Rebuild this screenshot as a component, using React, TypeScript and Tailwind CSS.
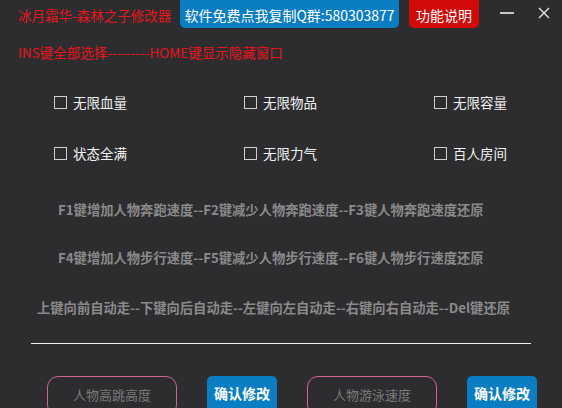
const font = "font-['Microsoft_YaHei','Noto_Sans_CJK_SC',sans-serif]";

function Check({ label }: { label: string }) {
  return (
    <label className="flex items-center gap-[6px] text-[13.5px] leading-[20px] text-[#f2f2f2]">
      <span className="block w-[13px] h-[13px] border border-[#cfcfcf] shrink-0" />
      {label}
    </label>
  );
}

function InputRow({ placeholder }: { placeholder: string }) {
  return (
    <div className="flex items-start gap-[30px]">
      <div className="w-[130px] h-[40px] rounded-[11px] border border-[#d1638e] flex items-start justify-center pt-[8px] text-[13px] text-[#7a7a7a]">
        {placeholder}
      </div>
      <button
        type="button"
        className="w-[70px] h-[40px] rounded-[5px] bg-[#0b7dc3] text-white font-bold text-[14px] flex items-start justify-center pt-[7px]"
      >
        确认修改
      </button>
    </div>
  );
}

export default function App() {
  return (
    <div className={`w-[562px] h-[408px] overflow-hidden bg-[#2d2d30] flex flex-col ${font}`}>
      {/* title bar */}
      <div className="h-[28px] flex items-start shrink-0">
        <span className="w-[180px] shrink-0 pl-[18px] pt-[5px] text-[13.5px] leading-[20px] text-[#e8141c] whitespace-nowrap">
          冰月霜华-森林之子修改器
        </span>
        <button
          type="button"
          className="w-[219px] shrink-0 h-[28px] rounded-b-[5px] bg-[#0b7dc3] text-white text-[14px] leading-[20px] pt-[1px] whitespace-nowrap"
        >
          软件免费点我复制Q群:580303877
        </button>
        <button
          type="button"
          className="ml-[10px] shrink-0 w-[70px] h-[28px] rounded-b-[5px] bg-[#d10a0a] text-white text-[14px] leading-[20px] pt-[1px]"
        >
          功能说明
        </button>
        <span className="ml-[21px] mt-[12px] block shrink-0 w-[14px] h-[2px] bg-[#c8c8c8]" />
        <svg className="ml-[24px] mt-[7px] shrink-0" width="12" height="12" viewBox="0 0 12 12">
          <path d="M1 1 L11 11 M11 1 L1 11" stroke="#e6e6e6" strokeWidth="1.4" />
        </svg>
      </div>

      <div className="mt-[14px] pl-[18px] text-[13.5px] leading-[20px] text-[#e8141c] whitespace-nowrap">
        INS键全部选择---------HOME键显示隐藏窗口
      </div>

      <div className="mt-[30px] pl-[54px] grid grid-cols-[190px_190px_auto]">
        <Check label="无限血量" />
        <Check label="无限物品" />
        <Check label="无限容量" />
      </div>
      <div className="mt-[31px] pl-[54px] grid grid-cols-[190px_190px_auto]">
        <Check label="状态全满" />
        <Check label="无限力气" />
        <Check label="百人房间" />
      </div>

      <div className="mt-[37px] pl-[58px] font-bold text-[13.3px] leading-[20px] text-[#8a8a8a] whitespace-nowrap">
        F1键增加人物奔跑速度--F2键减少人物奔跑速度--F3键人物奔跑速度还原
      </div>
      <div className="mt-[28px] pl-[58px] font-bold text-[13.3px] leading-[20px] text-[#8a8a8a] whitespace-nowrap">
        F4键增加人物步行速度--F5键减少人物步行速度--F6键人物步行速度还原
      </div>
      <div className="mt-[30px] pl-[37px] font-bold text-[13.3px] leading-[20px] text-[#8a8a8a] whitespace-nowrap">
        上键向前自动走--下键向后自动走--左键向左自动走--右键向右自动走--Del键还原
      </div>

      <div className="mt-[25px] ml-[31px] w-[500px] h-px bg-[#f0f0f0] shrink-0" />

      <div className="mt-[32px] pl-[47px] flex gap-[30px]">
        <InputRow placeholder="人物高跳高度" />
        <InputRow placeholder="人物游泳速度" />
      </div>
    </div>
  );
}
